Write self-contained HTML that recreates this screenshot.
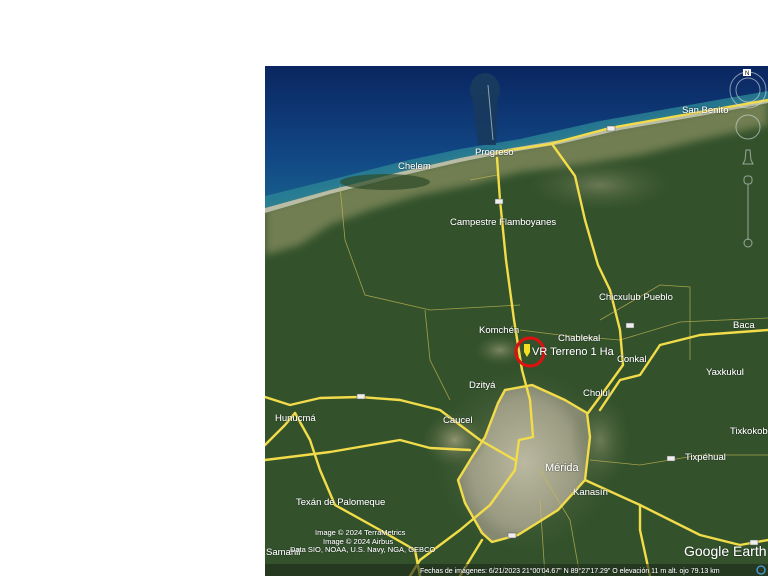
<!DOCTYPE html>
<html><head><meta charset="utf-8"><style>
html,body{margin:0;padding:0;background:#fff;width:768px;height:576px;overflow:hidden}
svg{position:absolute;left:0;top:0}
text{font-family:"Liberation Sans",sans-serif;fill:#fff}
</style></head><body>
<svg width="768" height="576" viewBox="0 0 768 576">
<defs>
<linearGradient id="sea" x1="0" y1="0" x2="0" y2="1">
<stop offset="0" stop-color="#0a2660"/><stop offset="0.55" stop-color="#114684"/><stop offset="1" stop-color="#1a6a8e"/>
</linearGradient>
<radialGradient id="city" cx="0.5" cy="0.5" r="0.5">
<stop offset="0" stop-color="#c2bfa8"/><stop offset="0.8" stop-color="#a4a28a"/><stop offset="1" stop-color="#8e8f78"/>
</radialGradient>
<radialGradient id="pale" cx="0.5" cy="0.5" r="0.5">
<stop offset="0" stop-color="#8f9470"/><stop offset="1" stop-color="#55683f" stop-opacity="0"/>
</radialGradient>
<filter id="sh"><feDropShadow dx="0" dy="0" stdDeviation="0.8" flood-color="#000" flood-opacity="0.9"/></filter>
<filter id="bl"><feGaussianBlur stdDeviation="4"/></filter>
<clipPath id="mc"><rect x="265" y="66" width="503" height="510"/></clipPath>
</defs>
<g clip-path="url(#mc)">
<rect x="265" y="66" width="503" height="510" fill="#2e4a28"/>
<rect x="265" y="66" width="503" height="160" fill="url(#sea)"/>
<path d="M265,208 L330,190 L400,172 L460,158 L500,150 L560,140 L620,126 L700,112 L768,99 L768,576 L265,576 Z" fill="#33522c"/>
<!-- coastal pale band -->
<path d="M265,208 L330,190 L400,172 L460,158 L500,150 L560,140 L620,126 L700,112 L768,99 L768,125 L700,140 L640,155 L580,165 L520,172 L470,185 L420,195 L370,210 L330,225 L300,245 L265,255 Z" fill="#7c8658" opacity="0.85" filter="url(#bl)"/>
<path d="M265,208 L330,190 L400,172 L460,158 L500,150 L560,140 L620,126 L700,112 L768,99 L768,103 L700,116 L620,130 L560,144 L500,154 L460,162 L400,176 L330,194 L265,213 Z" fill="#b9bca6"/>
<path d="M265,196 L330,180 L400,162 L460,149 L520,139 L600,121 L700,103 L768,91 L768,99 L700,112 L620,126 L560,140 L500,150 L460,158 L400,172 L330,190 L265,208 Z" fill="#2a8596" opacity="0.8"/>
<!-- pier -->
<ellipse cx="485" cy="90" rx="15" ry="17" fill="#183a5e"/>
<path d="M472,95 L498,95 L496,145 L478,145 Z" fill="#183a5e" opacity="0.9"/>
<line x1="488" y1="85" x2="493" y2="140" stroke="#8fa0ac" stroke-width="1"/>
<ellipse cx="385" cy="182" rx="45" ry="8" fill="#2e4c2a" opacity="0.7"/>
<ellipse cx="600" cy="185" rx="70" ry="25" fill="url(#pale)" opacity="0.6"/>
<!-- city -->
<ellipse cx="525" cy="460" rx="90" ry="90" fill="url(#pale)" opacity="0.7"/>
<path d="M505,390 L532,385 L565,400 L587,413 L590,437 L585,480 L558,510 L518,535 L492,542 L482,533 L465,503 L458,480 L472,457 L485,437 L498,403 Z" fill="url(#city)" opacity="0.9"/>
<ellipse cx="455" cy="440" rx="32" ry="28" fill="url(#pale)"/>
<ellipse cx="500" cy="350" rx="25" ry="15" fill="url(#pale)" opacity="0.8"/>
<ellipse cx="600" cy="440" rx="30" ry="45" fill="url(#pale)" opacity="0.6"/>
<!-- thin roads -->
<g fill="none" stroke="#c9bb55" stroke-width="0.8" opacity="0.75">
<path d="M340,186 L345,240 L365,295 L430,310 L520,305"/>
<path d="M425,310 L430,360 L450,400"/>
<path d="M520,330 L560,335 L620,340 L680,322 L768,318"/>
<path d="M600,320 L660,285 L690,287 L690,360"/>
<path d="M590,460 L640,465 L700,455 L768,455"/>
<path d="M540,470 L570,520 L580,576"/>
<path d="M540,500 L545,576"/>
<path d="M497,175 L470,180"/>
</g>
<!-- main roads -->
<g fill="none" stroke="#f2dc4a" stroke-width="2.4" stroke-linejoin="round" stroke-linecap="round">
<path d="M495,153 L510,150 L550,144 L610,128 L700,112 L768,100"/>
<path d="M497,158 L500,200 L506,260 L514,320 L522,370 L530,400 L533,437 L519,440 L515,470 L490,505 L460,530 L420,560 L410,576"/>
<path d="M552,144 L575,176 L585,220 L598,265 L610,290 L620,330 L623,365 L605,390 L588,413"/>
<path d="M505,390 L532,385 L565,400 L587,413 L590,437 L585,480 L558,510 L518,535 L492,542 L482,533 L465,503 L458,480 L472,457 L485,437 L498,403 L505,390"/>
<path d="M265,397 L290,405 L320,398 L360,397 L400,400 L440,410 L480,440 L515,460"/>
<path d="M265,460 L330,452 L400,440 L430,448 L470,450"/>
<path d="M295,413 L310,440 L320,470 L335,505 L380,530 L415,550 L420,576"/>
<path d="M295,413 L285,425 L265,445"/>
<path d="M585,480 L640,505 L700,535 L740,545 L768,540"/>
<path d="M640,505 L640,530 L650,576"/>
<path d="M600,410 L620,380 L640,375 L660,345 L700,335 L768,330"/>
<path d="M482,540 L460,576"/>
</g>
<g fill="#eee" stroke="#555" stroke-width="0.5">
<rect x="607" y="126" width="8" height="5"/><rect x="495" y="199" width="8" height="5"/><rect x="626" y="323" width="8" height="5"/>
<rect x="357" y="394" width="8" height="5"/><rect x="667" y="456" width="8" height="5"/><rect x="508" y="533" width="8" height="5"/><rect x="750" y="540" width="8" height="5"/>
</g>
<g font-size="9.5" filter="url(#sh)">
<text x="398" y="169">Chelem</text>
<text x="475" y="155">Progreso</text>
<text x="682" y="113">San Benito</text>
<text x="450" y="225">Campestre Flamboyanes</text>
<text x="599" y="300">Chicxulub Pueblo</text>
<text x="479" y="333">Komchén</text>
<text x="558" y="341">Chablekal</text>
<text x="733" y="328">Baca</text>
<text x="617" y="362">Conkal</text>
<text x="706" y="375">Yaxkukul</text>
<text x="469" y="388">Dzityá</text>
<text x="583" y="396">Cholul</text>
<text x="275" y="421">Hunucmá</text>
<text x="443" y="423">Caucel</text>
<text x="730" y="434">Tixkokob</text>
<text x="685" y="460">Tixpéhual</text>
<text x="545" y="471" font-size="11">Mérida</text>
<text x="573" y="495">Kanasín</text>
<text x="296" y="505">Texán de Palomeque</text>
<text x="266" y="555">Samahil</text>
</g>
<g font-size="7.5" filter="url(#sh)">
<text x="315" y="535">Image © 2024 TerraMetrics</text>
<text x="323" y="544">Image © 2024 Airbus</text>
<text x="290" y="552">Data SIO, NOAA, U.S. Navy, NGA, GEBCO</text>
</g>
<circle cx="530" cy="352" r="14" fill="none" stroke="#e01010" stroke-width="3"/>
<path d="M524,344 L530,344 L530,352 L527,357 L524,352 Z" fill="#f2e020"/>
<text x="532" y="355" font-size="11" filter="url(#sh)">VR Terreno 1 Ha</text>
<g fill="none" stroke="#d8dde0" stroke-width="1" opacity="0.6">
<circle cx="748" cy="90" r="18"/><circle cx="748" cy="90" r="12"/>
<circle cx="748" cy="127" r="12"/>
<path d="M746,150 L750,150 L751,160 L753,164 L743,164 L745,160 Z"/>
<rect x="744" y="176" width="8" height="8" rx="3"/>
<line x1="748" y1="184" x2="748" y2="240"/>
<circle cx="748" cy="243" r="4"/>
</g>
<rect x="743" y="69" width="8" height="7" fill="#fff"/>
<text x="745" y="75" font-size="6" style="fill:#000">N</text>
<rect x="265" y="564" width="503" height="12" fill="#1c2a1a" opacity="0.6"/>
<text x="420" y="573" font-size="7" filter="url(#sh)">Fechas de imágenes: 6/21/2023    21°00'04.67" N   89°27'17.29" O   elevación    11 m      alt. ojo  79.13 km</text>
<circle cx="761" cy="570" r="4" fill="none" stroke="#4aa0e0" stroke-width="1.3"/>
<text x="684" y="556" font-size="14" filter="url(#sh)">Google Earth</text>
</g>
</svg>
</body></html>
